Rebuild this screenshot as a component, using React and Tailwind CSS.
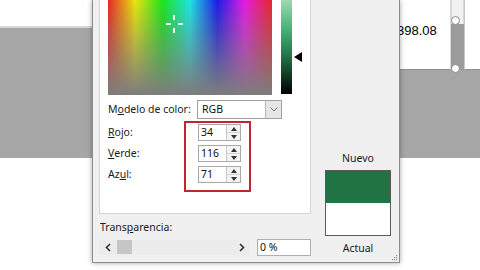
import React from "react";

function Spinner() {
  return (
    <div className="flex h-full w-[14px] flex-col border-l border-[#c8c8c8] bg-[#f3f3f3]">
      <div className="flex flex-1 items-center justify-center border-b border-[#d4d4d4]">
        <svg width="6" height="4" viewBox="0 0 6 4"><path d="M0 4 L3 0 L6 4 Z" fill="#333" /></svg>
      </div>
      <div className="flex flex-1 items-center justify-center">
        <svg width="6" height="4" viewBox="0 0 6 4"><path d="M0 0 L3 4 L6 0 Z" fill="#333" /></svg>
      </div>
    </div>
  );
}

function NumInput({ value }) {
  return (
    <div className="flex h-[17px] w-[43px] border border-[#a9a9a9] bg-white">
      <div className="flex flex-1 items-center pl-[2px] text-[10.5px] leading-none text-[#111]">{value}</div>
      <Spinner />
    </div>
  );
}

export default function App() {
  return (
    <div className="relative h-[270px] w-[480px] overflow-hidden bg-white font-['Noto_Sans',sans-serif]">
      {/* slide background */}
      <div className="flex h-full flex-col">
        <div className="h-[28px] border-b-2 border-[#d6d6d6] bg-white" />
        <div className="h-[130px] bg-[#a6a6a6]" />
        <div className="flex-1 bg-white" />
      </div>

      {/* selected shape on right side */}
      <div className="absolute left-[396px] top-0 flex h-[70px] w-[84px]">
        <div className="flex w-[55px] items-start border-r border-[#d8d8d8] border-b border-b-[#8f8f8f] bg-white pl-[1px] pt-[24px]">
          <span className="font-['Liberation_Sans',sans-serif] text-[13px] leading-none text-black">398.08</span>
        </div>
        <div className="flex w-[13px] flex-col">
          <div className="h-[24px] border-x border-[#d8d8d8] bg-[#f2f2f2]" />
          <div className="flex-1 bg-[#9b9b9b]" />
        </div>
        <div className="flex-1 border-l border-[#c8c8c8] border-b border-b-[#8f8f8f] bg-white" />
      </div>
      <div className="absolute left-[451px] top-[16px] h-[9px] w-[9px] rounded-full border border-[#8a8a8a] bg-white" />
      <div className="absolute left-[451px] top-[64px] h-[9px] w-[9px] rounded-full border border-[#8a8a8a] bg-white" />

      {/* dialog */}
      <div className="absolute left-[92px] top-0 flex h-[263px] w-[308px] border-x border-b border-[#8c8c8c] bg-[#f0f0f0] shadow-[0_0_5px_rgba(0,0,0,0.35)]">
        {/* left column */}
        <div className="flex w-[218px] flex-col pl-[6px]">
          <div className="flex h-[214px] flex-col border-x border-b border-[#d5d5d5] bg-white pl-[8px]">
            {/* spectrum row */}
            <div className="flex items-start">
              <div className="relative h-[95px] w-[164px] bg-[linear-gradient(to_right,#f51c1c,#f5f000,#10f010,#10f0f0,#1010f0,#f010f0,#f51c1c)]">
                <div className="h-full w-full bg-[linear-gradient(to_bottom,rgba(128,128,128,0.1),#7d7d7d)]" />
                <div className="absolute left-[65px] top-[15px] h-[5px] w-[2px] bg-[#e8ffe8]" />
                <div className="absolute left-[65px] top-[28px] h-[5px] w-[2px] bg-[#e8ffe8]" />
                <div className="absolute left-[58px] top-[23px] h-[2px] w-[5px] bg-[#e8ffe8]" />
                <div className="absolute left-[70px] top-[23px] h-[2px] w-[5px] bg-[#e8ffe8]" />
              </div>
              <div className="ml-[9px] h-[94px] w-[11px] bg-[linear-gradient(to_bottom,#9ed9b6_0%,#45b074_32%,#227447_60%,#000000_100%)]" />
              <svg className="ml-[2px] mt-[52px]" width="8" height="10" viewBox="0 0 8 10"><path d="M0 5 L8 0 L8 10 Z" fill="#000" /></svg>
            </div>

            {/* color model row */}
            <div className="mt-[5px] flex h-[19px] items-center">
              <div className="w-[89px] text-[10.5px] leading-none text-[#1a1a1a]">
                M<u>o</u>delo de color:
              </div>
              <div className="flex h-[19px] w-[85px] border border-[#a0a0a0] bg-white">
                <div className="flex flex-1 items-center pl-[4px] text-[10.5px] leading-none text-[#111]">RGB</div>
                <div className="flex w-[16px] items-center justify-center border-l border-[#b8b8b8] bg-[#e6e6e6]">
                  <svg width="8" height="5" viewBox="0 0 8 5"><path d="M0.5 0.5 L4 4 L7.5 0.5" fill="none" stroke="#777" strokeWidth="1" /></svg>
                </div>
              </div>
            </div>

            {/* RGB rows */}
            <div className="mt-[2px] flex">
              <div className="flex w-[76px] flex-col gap-[4px] pt-[3px] text-[10.5px] leading-none text-[#1a1a1a]">
                <div className="flex h-[17px] items-center"><u>R</u>ojo:</div>
                <div className="flex h-[17px] items-center"><u>V</u>erde:</div>
                <div className="flex h-[17px] items-center">Az<u>u</u>l:</div>
              </div>
              <div className="flex h-[71px] w-[67px] flex-col gap-[4px] border-2 border-[#c0272d] pl-[12px] pt-[1px]">
                <NumInput value="34" />
                <NumInput value="116" />
                <NumInput value="71" />
              </div>
            </div>
          </div>

          {/* transparency */}
          <div className="mt-[8px] pl-[1px] text-[10.5px] leading-none text-[#1a1a1a]">
            Trans<u>p</u>arencia:
          </div>
          <div className="mt-[6px] flex h-[17px] items-center">
            <div className="flex h-[15px] w-[150px] items-center bg-[#ececec]">
              <svg className="ml-[6px]" width="6" height="9" viewBox="0 0 6 9"><path d="M5 1 L1.5 4.5 L5 8" fill="none" stroke="#333" strokeWidth="1.6" /></svg>
              <div className="ml-[6px] h-[14px] w-[15px] bg-[#c6c6c6]" />
              <div className="flex-1" />
              <svg className="mr-[4px]" width="6" height="9" viewBox="0 0 6 9"><path d="M1 1 L4.5 4.5 L1 8" fill="none" stroke="#333" strokeWidth="1.6" /></svg>
            </div>
            <div className="ml-[8px] flex h-[17px] w-[54px] items-center border border-[#b0b0b0] bg-white pl-[2px] text-[10.5px] leading-none text-[#111]">
              0 %
            </div>
          </div>
        </div>

        {/* right column */}
        <div className="relative flex flex-1 flex-col items-center pl-[6px] pt-[153px]">
          <div className="text-[10.5px] leading-none text-[#1a1a1a]">Nuevo</div>
          <div className="mt-[6px] flex h-[66px] w-[66px] flex-col border border-[#5a5a5a]">
            <div className="h-[32px] bg-[#217346]" />
            <div className="flex-1 bg-white" />
          </div>
          <div className="mt-[7px] text-[10.5px] leading-none text-[#1a1a1a]">Actual</div>
          <svg className="absolute bottom-[1px] right-[1px]" width="7" height="7" viewBox="0 0 7 7">
            <rect x="5" y="1" width="1.2" height="1.2" fill="#999" />
            <rect x="3" y="3" width="1.2" height="1.2" fill="#999" />
            <rect x="5" y="3" width="1.2" height="1.2" fill="#999" />
            <rect x="1" y="5" width="1.2" height="1.2" fill="#999" />
            <rect x="3" y="5" width="1.2" height="1.2" fill="#999" />
            <rect x="5" y="5" width="1.2" height="1.2" fill="#999" />
          </svg>
        </div>
      </div>
    </div>
  );
}
